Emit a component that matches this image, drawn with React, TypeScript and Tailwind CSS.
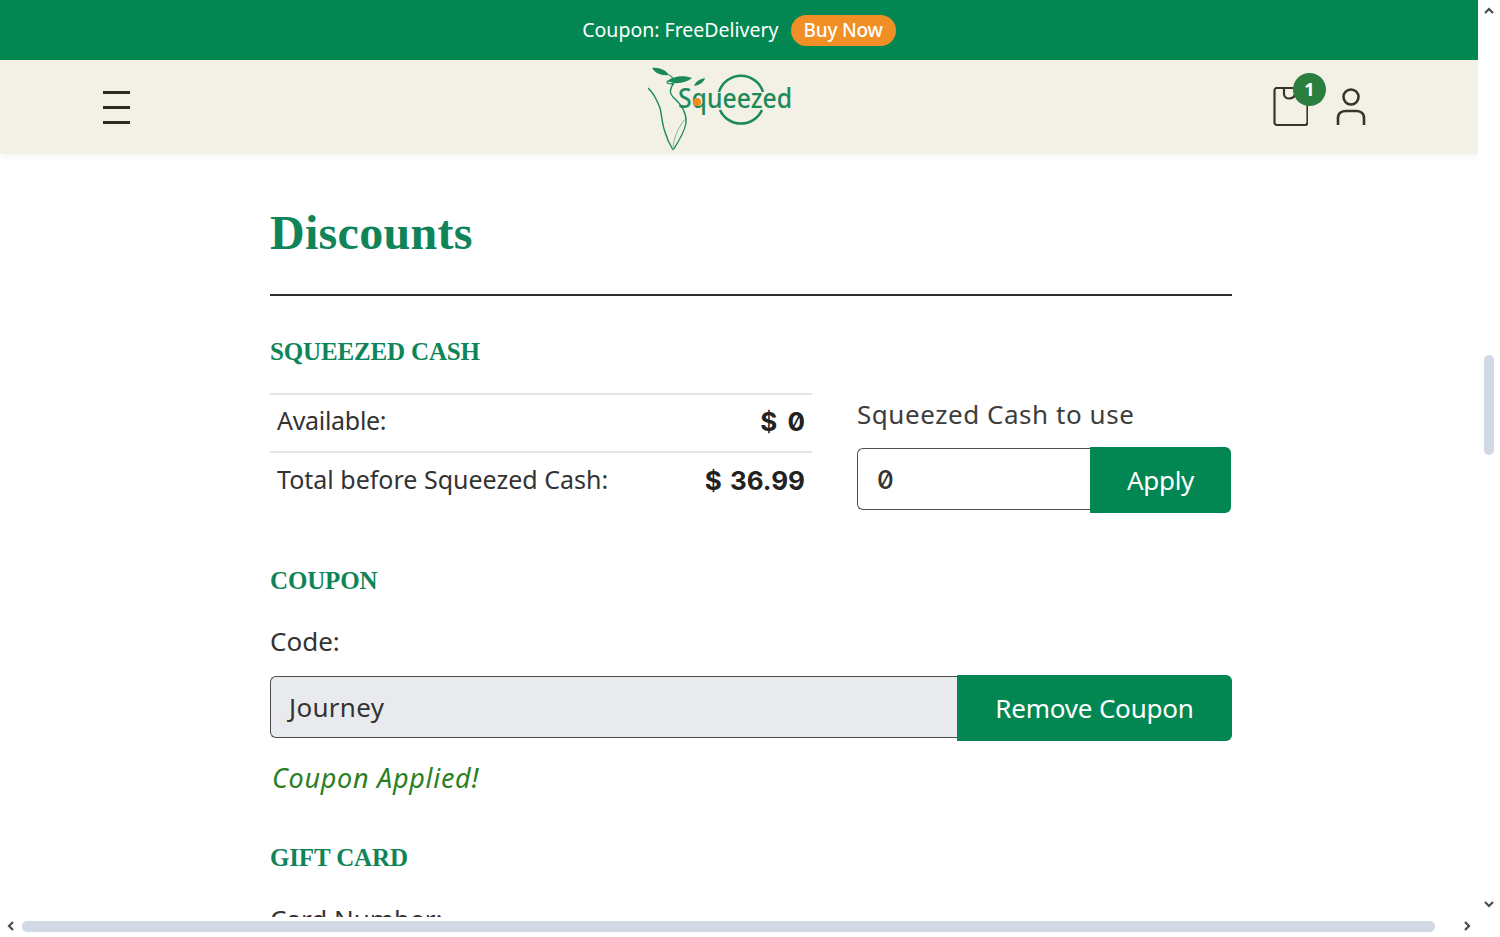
import React from 'react';

const sans = "font-['Noto_Sans',sans-serif]";
const serif = "font-['Liberation_Serif',serif]";

const Logo = () => (
  <svg width="146" height="86" viewBox="0 0 146 86" className="block">
    <path d="M4 2 C11 1 18 4 21 9 C13 10 7 7 4 2Z" fill="#1b8a5a" />
    <path d="M20 15 C25 10 36 9 44 12 C38 17 27 19 20 15Z" fill="#1b8a5a" />
    <path d="M21 9 C27 12 24 14 20 15 C17 17 22 19 26 17 C22 22 21 27 25 31 C33 38 39 46 38 57 C36 68 30 76 25 84" fill="none" stroke="#1b8a5a" strokeWidth="1.3" />
    <path d="M0 22 C6 27 9 34 12 42 C14 50 14 58 17 66 C19 73 22 79 25 84" fill="none" stroke="#1b8a5a" strokeWidth="1.4" />
    <path d="M25 84 C25 74 29 64 36 54" fill="none" stroke="#7fb79c" strokeWidth="1" />
    <path d="M46 20 C48 15 52 13 57 12 C56 16 52 19 46 20Z" fill="#1b8a5a" />
    <path d="M71 26 A23 23 0 0 1 115 26" fill="none" stroke="#1b8a5a" strokeWidth="2.5" />
    <path d="M72 44 A23 23 0 0 0 114 44" fill="none" stroke="#1b8a5a" strokeWidth="2.5" />
    <text x="30" y="42" fill="#1b8a5a" fontSize="27" fontWeight="500" textLength="114" lengthAdjust="spacingAndGlyphs" fontFamily="'Noto Sans', sans-serif">Squeezed</text>
    <circle cx="49" cy="36" r="4" fill="#f08c23" />
  </svg>
);

const CartIcon = () => (
  <svg width="36" height="40" viewBox="0 0 36 40" className="block" fill="none" stroke="#3a3428" strokeWidth="2.2">
    <rect x="2.5" y="1" width="33" height="37" rx="2.5" />
    <path d="M12 2 V7 C12 13 22 13 23 7" />
  </svg>
);

const UserIcon = () => (
  <svg width="30" height="38" viewBox="0 0 30 38" className="block" fill="none" stroke="#3a3428" strokeWidth="2.6">
    <circle cx="15" cy="9" r="7.5" />
    <path d="M2 37 V30 C2 25 6 23 10 23 H20 C24 23 28 25 28 30 V37" />
  </svg>
);

const Arrow = ({ path }: { path: string }) => (
  <svg width="10" height="10" viewBox="0 0 10 10" className="block" fill="none" stroke="#4b4b4b" strokeWidth="2.2">
    <path d={path} />
  </svg>
);

const SectionTitle = ({ children, className }: { children: React.ReactNode; className: string }) => (
  <h3 className={`${serif} text-[25px] leading-[30px] font-bold tracking-[-0.15px] text-[#0f8458] ${className}`}>{children}</h3>
);

export default function App() {
  return (
    <div className={`${sans} w-[1500px] h-[937px] overflow-hidden bg-white flex flex-col`}>
      <div className="flex h-[917px]">
        <div className="w-[1478px] h-[917px] overflow-hidden">
          <div className="h-[60px] bg-[#028753] flex items-center justify-center gap-[12px]">
            <span className="text-white text-[19.5px]">Coupon: FreeDelivery</span>
            <span className="h-[31px] px-[13px] rounded-full bg-[#f08f25] text-white text-[19px] font-medium tracking-[-0.2px] flex items-center">Buy Now</span>
          </div>

          <header className="h-[94px] bg-[#f3f0e6] shadow-[0_4px_6px_rgba(0,0,0,0.04)] flex items-center justify-between pl-[103px] pr-[112px]">
            <div className="flex flex-col gap-[12px] w-[27px]">
              <span className="h-[3px] bg-[#2e2a1f]" />
              <span className="h-[3px] bg-[#2e2a1f]" />
              <span className="h-[3px] bg-[#2e2a1f]" />
            </div>
            <div className="ml-[40px] mt-[4px]"><Logo /></div>
            <div className="flex items-center gap-[28px]">
              <div className="relative">
                <CartIcon />
                <span className="absolute -top-[14px] -right-[18px] w-[33px] h-[33px] rounded-full bg-[#2b7f3e] text-white text-[18px] font-bold flex items-center justify-center">1</span>
              </div>
              <UserIcon />
            </div>
          </header>

          <main className="pl-[270px] w-[1232px] text-[#333333]">
            <h1 className={`${serif} mt-[52px] text-[48px] leading-[54px] font-bold tracking-[0.3px] text-[#0f8458]`}>Discounts</h1>
            <div className="mt-[34px] h-[2px] bg-[#2e2e2e]" />

            <SectionTitle className="mt-[41px]">SQUEEZED CASH</SectionTitle>
            <div className="flex items-start mt-[26px]">
              <div className="w-[542px]">
                <div className="h-[58px] pb-[4px] border-t-2 border-[#e4e4e4] flex items-center justify-between px-[7px] text-[25px]">
                  <span className="tracking-[-0.3px]">Available:</span>
                  <span className="font-['Inter',sans-serif] slashed-zero font-bold text-[#222222] text-[26px] [word-spacing:4px]">$ 0</span>
                </div>
                <div className="h-[58px] pb-[2px] border-t-2 border-[#e4e4e4] flex items-center justify-between px-[7px] text-[25px]">
                  <span>Total before Squeezed Cash:</span>
                  <span className="font-['Inter',sans-serif] font-bold text-[#222222] text-[26px] [word-spacing:2px]">$ 36.99</span>
                </div>
              </div>
              <div className="ml-[45px] mt-[3px]">
                <div className="text-[26px] leading-[36px] tracking-[0.55px] text-[#3d3d3d]">Squeezed Cash to use</div>
                <div className="flex items-start mt-[15px]">
                  <div className="mt-[1px] w-[233px] h-[62px] border border-[#4d4d4d] border-r-0 rounded-l-[6px] pl-[19px] flex items-center font-['Inter',sans-serif] slashed-zero font-medium text-[26px]">0</div>
                  <button className="w-[141px] h-[66px] bg-[#028753] rounded-r-[6px] text-white text-[26px] tracking-[-0.3px]">Apply</button>
                </div>
              </div>
            </div>

            <SectionTitle className="mt-[53px]">COUPON</SectionTitle>
            <div className="mt-[27px] text-[26px] leading-[36px]">Code:</div>
            <div className="flex items-start mt-[16px]">
              <div className="mt-[1px] w-[687px] h-[62px] bg-[#e9eaee] border border-[#4d4d4d] border-r-0 rounded-l-[6px] pl-[18px] flex items-center text-[26px] tracking-[0.3px]">Journey</div>
              <button className="w-[275px] h-[66px] bg-[#028753] rounded-r-[6px] text-white text-[26px] tracking-[-0.2px]">Remove Coupon</button>
            </div>
            <div className="mt-[19px] ml-[2px] text-[27px] leading-[36px] italic tracking-[0.7px] text-[#2b7f1f]">Coupon Applied!</div>

            <SectionTitle className="mt-[47px]">GIFT CARD</SectionTitle>
            <div className="mt-[28px] text-[26px] leading-[36px]">Card Number:</div>
          </main>
        </div>

        <div className="relative flex-1">
          <div className="absolute top-[6px] left-[6px]"><Arrow path="M1 7 L5 3 L9 7" /></div>
          <div className="absolute top-[355px] left-[6px] w-[10px] h-[100px] rounded-[5px] bg-[#d0d9e4]" />
          <div className="absolute top-[899px] left-[6px]"><Arrow path="M1 3 L5 7 L9 3" /></div>
        </div>
      </div>

      <div className="h-[20px] flex items-center pb-[2px]">
        <div className="ml-[6px] w-[10px]"><Arrow path="M7 1 L3 5 L7 9" /></div>
        <div className="ml-[6px] w-[1413px] h-[11px] rounded-[5px] bg-[#d0d9e4]" />
        <div className="ml-[27px] w-[10px]"><Arrow path="M3 1 L7 5 L3 9" /></div>
      </div>
    </div>
  );
}
